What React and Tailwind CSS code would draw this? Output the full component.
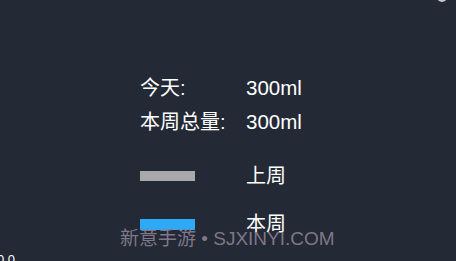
export default function App() {
  const font = { fontFamily: '"Liberation Sans", "Noto Sans CJK SC", sans-serif' }
  return (
    <div className="relative h-[261px] w-[456px] overflow-hidden bg-[#232935] text-white" style={font}>
      {/* top-right edge of a control */}
      <div className="absolute right-[9px] top-[-8px] h-[10px] w-[10px] rounded-full bg-[#c8c8c8]" />

      <div className="flex flex-col pl-[140px] pt-[71px]">
        <div className="flex h-[34px] items-center text-[20px] leading-none">
          <span className="w-[106px]">今天:</span>
          <span className="text-[20.5px]">300ml</span>
        </div>
        <div className="flex h-[34px] items-center text-[20px] leading-none">
          <span className="w-[106px]">本周总量:</span>
          <span className="text-[20.5px]">300ml</span>
        </div>

        <div className="mt-[22px] flex h-[30px] items-center text-[20px] leading-none">
          <div className="w-[106px]">
            <div className="h-[10px] w-[55px] bg-[#a9a9a9]" />
          </div>
          <span>上周</span>
        </div>
        <div className="mt-[18px] flex h-[30px] items-center text-[20px] leading-none">
          <div className="w-[106px]">
            <div className="h-[11px] w-[55px] bg-[#2ea9f6]" />
          </div>
          <span>本周</span>
        </div>
      </div>

      {/* axis label, cut off at the bottom */}
      <div className="absolute bottom-[-8px] left-[-3px] text-[13px] text-white">0.0</div>

      {/* watermark */}
      <div className="absolute left-[120px] top-[229px] whitespace-nowrap text-[19px] leading-none text-[#8c8196]/90">
        新意手游 • SJXINYI.COM
      </div>
    </div>
  )
}
